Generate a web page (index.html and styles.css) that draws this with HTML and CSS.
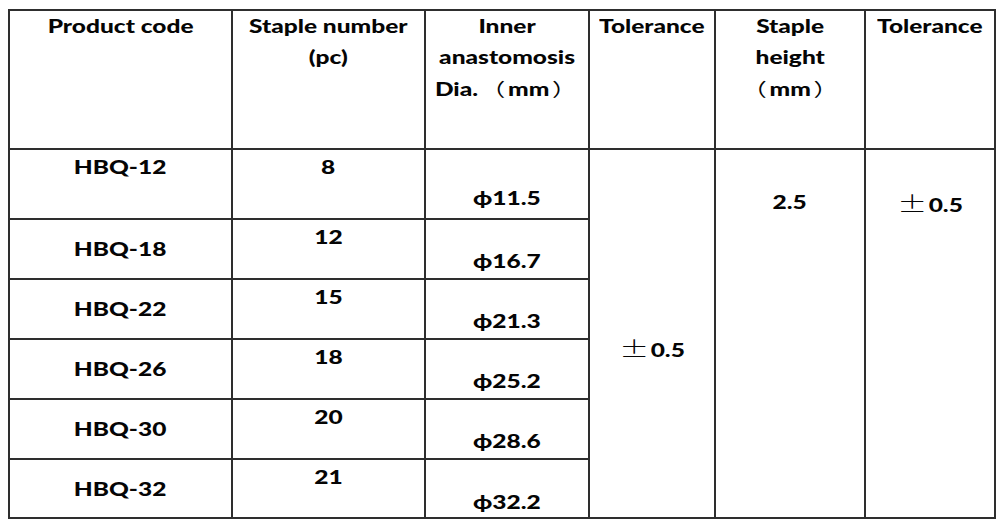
FILE: index.html
```html
<!DOCTYPE html>
<html lang="en">
<head>
<meta charset="utf-8">
<title>Staple specification</title>
<link rel="stylesheet" href="styles.css">
</head>
<body>
<table class="spec">
  <colgroup>
    <col class="w-code">
    <col class="w-num">
    <col class="w-dia">
    <col class="w-tol">
    <col class="w-height">
    <col class="w-tol2">
  </colgroup>
  <thead>
    <tr class="head">
      <th><span class="t">Product code</span></th>
      <th><span class="t">Staple number<br>(pc)</span></th>
      <th><span class="t">Inner<br>anastomosis<br>Dia.<span class="cjk">（</span>mm<span class="cjk">）</span></span></th>
      <th><span class="t">Tolerance</span></th>
      <th><span class="t">Staple<br>height<br><span class="cjk">（</span>mm<span class="cjk">）</span></span></th>
      <th><span class="t">Tolerance</span></th>
    </tr>
  </thead>
  <tbody>
    <tr class="row first">
      <td class="code code-first"><span class="t">HBQ-12</span></td>
      <td class="num"><span class="t">8</span></td>
      <td class="dia dia-first"><span class="t">ϕ11.5</span></td>
      <td class="tol-main" rowspan="6"><span class="t"><span class="pm">±</span>0.5</span></td>
      <td class="side" rowspan="6"><span class="t">2.5</span></td>
      <td class="side" rowspan="6"><span class="t"><span class="pm">±</span>0.5</span></td>
    </tr>
    <tr class="row">
      <td class="code"><span class="t">HBQ-18</span></td>
      <td class="num"><span class="t">12</span></td>
      <td class="dia"><span class="t">ϕ16.7</span></td>
    </tr>
    <tr class="row">
      <td class="code"><span class="t">HBQ-22</span></td>
      <td class="num"><span class="t">15</span></td>
      <td class="dia"><span class="t">ϕ21.3</span></td>
    </tr>
    <tr class="row">
      <td class="code"><span class="t">HBQ-26</span></td>
      <td class="num"><span class="t">18</span></td>
      <td class="dia"><span class="t">ϕ25.2</span></td>
    </tr>
    <tr class="row">
      <td class="code"><span class="t">HBQ-30</span></td>
      <td class="num"><span class="t">20</span></td>
      <td class="dia"><span class="t">ϕ28.6</span></td>
    </tr>
    <tr class="row last">
      <td class="code"><span class="t">HBQ-32</span></td>
      <td class="num"><span class="t">21</span></td>
      <td class="dia dia-last"><span class="t">ϕ32.2</span></td>
    </tr>
  </tbody>
</table>
</body>
</html>
```

FILE: styles.css
```css
html, body {
  margin: 0;
  padding: 0;
  background: #ffffff;
}

body {
  padding: 9px 0 0 8px;
  font-family: Lato, "Noto Sans CJK SC", "DejaVu Sans", sans-serif;
  font-weight: 900;
  font-size: 18px;
  color: #050505;
}

.spec {
  border-collapse: collapse;
  table-layout: fixed;
  width: 986px;
}

.w-code { width: 223px; }
.w-num { width: 193px; }
.w-dia { width: 164px; }
.w-tol { width: 126px; }
.w-height { width: 150px; }
.w-tol2 { width: 130px; }

.spec th,
.spec td {
  border: 2px solid #2e2e2e;
  padding: 0;
  text-align: center;
}

.t {
  display: inline-block;
  transform: scaleX(1.36);
  white-space: nowrap;
}

.cjk {
  font-family: "Noto Sans CJK SC", sans-serif;
  font-weight: 400;
  margin: 0 2px;
}

.pm {
  font-family: "Noto Sans CJK SC", sans-serif;
  font-weight: 300;
  font-size: 22px;
  margin-right: 1px;
}

/* header */
.head {
  height: 139px;
}

.spec .head th {
  vertical-align: top;
  font-weight: 900;
  line-height: 31px;
  padding-top: 0;
}

/* body rows */
.row {
  height: 60px;
  line-height: 24px;
}

.row.first {
  height: 70px;
}

.row.last {
  height: 59px;
}

.spec td.code {
  vertical-align: middle;
}

.spec td.code-first {
  vertical-align: top;
  padding-top: 5px;
}

.spec td.num {
  vertical-align: top;
  padding-top: 5px;
}

.spec td.dia {
  vertical-align: bottom;
  padding-bottom: 5px;
}

.spec td.dia-first {
  padding-bottom: 8px;
}

.spec td.dia-last {
  padding-bottom: 3px;
}

.spec td.tol-main {
  vertical-align: middle;
  padding-top: 30px;
}

.spec td.side {
  vertical-align: top;
  padding-top: 40px;
}
```
